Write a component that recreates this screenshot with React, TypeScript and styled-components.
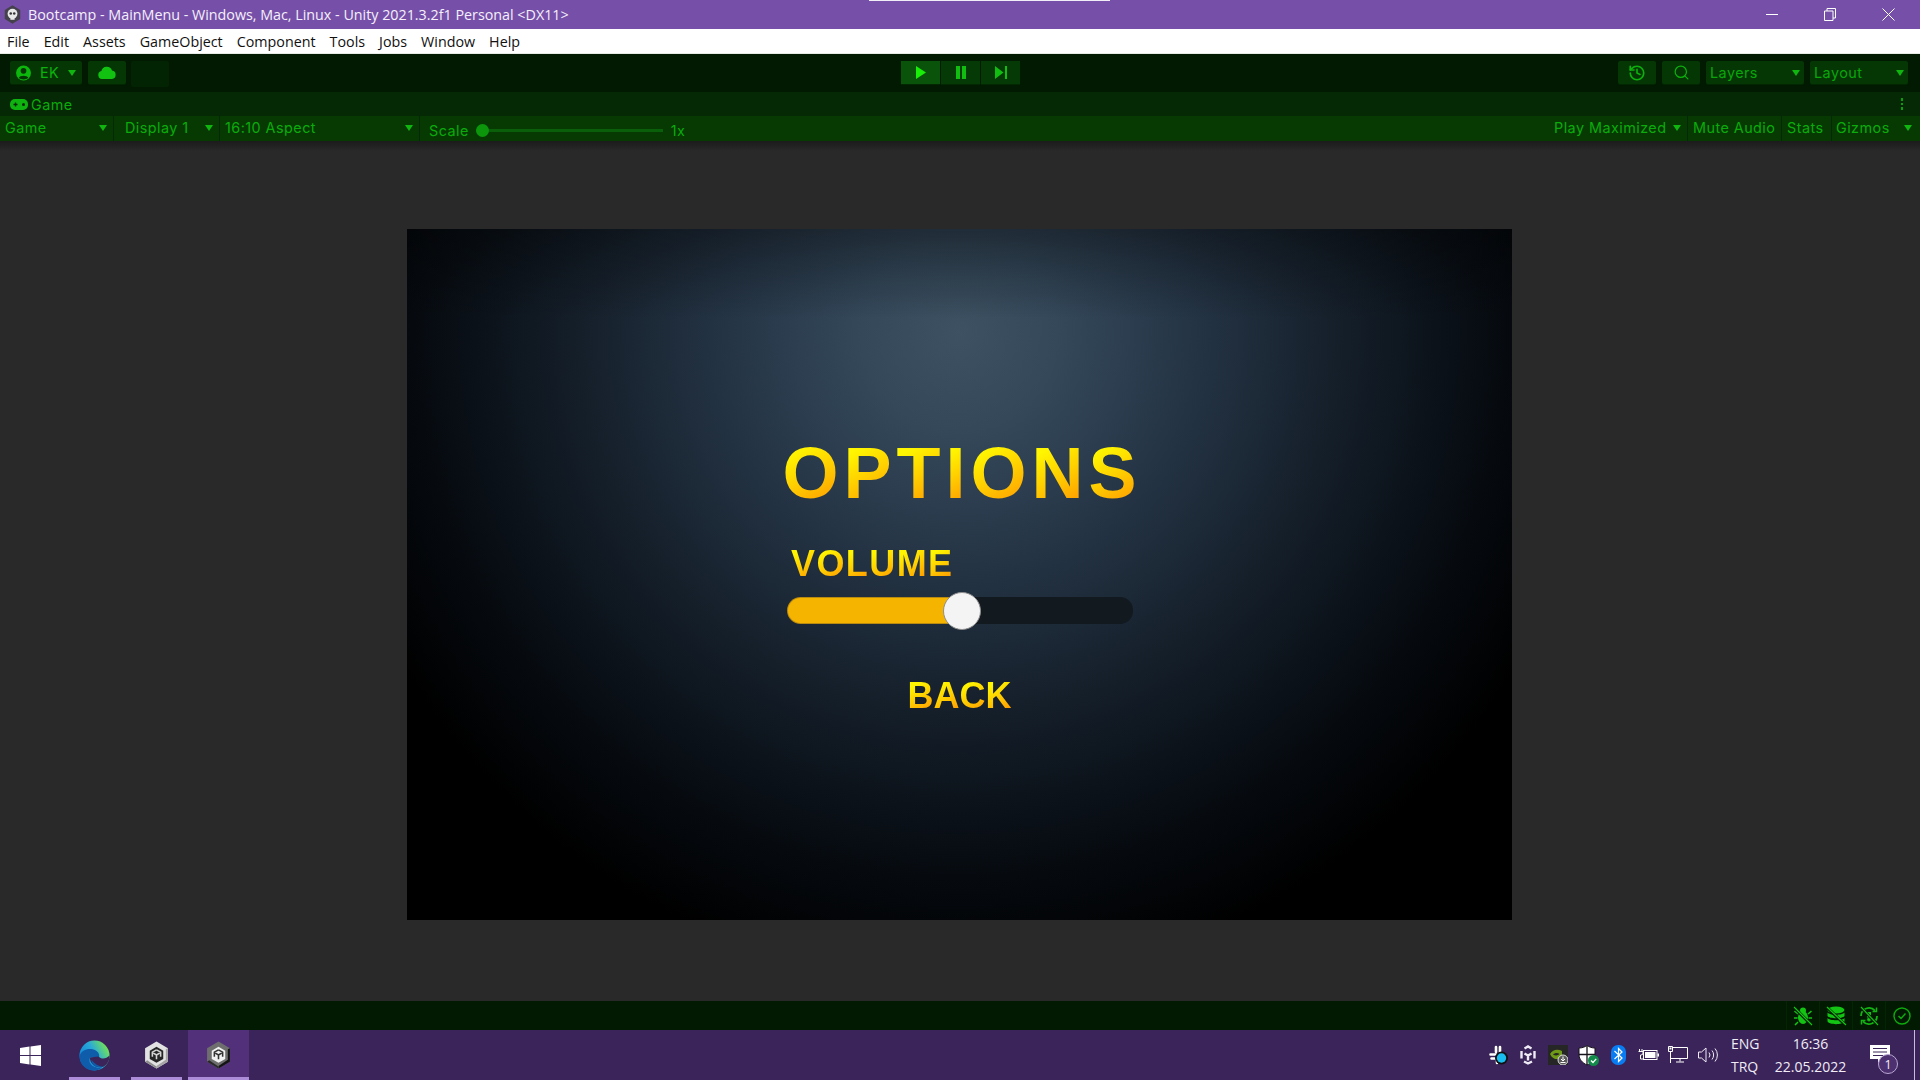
import React from "react";
import styled, { createGlobalStyle } from "styled-components";
import { History, Search } from "lucide-react";

const Global = createGlobalStyle`
  html, body { margin: 0; padding: 0; background: #292929; overflow: hidden; }
  #root { width: 1920px; height: 1080px; }
`;

const Shell = styled.div`
  position: relative;
  width: 1920px;
  height: 1080px;
  display: flex;
  flex-direction: column;
  font-family: "Open Sans", "Liberation Sans", sans-serif;
`;

const TopStrip = styled.div`
  position: absolute;
  left: 869px;
  top: 0;
  width: 241px;
  height: 1px;
  background: #f2eef8;
`;

const TitleBar = styled.div`
  height: 29px;
  flex: none;
  display: flex;
  align-items: center;
  padding: 0 3px 0 4px;
  background: #7650a8;
  color: #f4effa;
`;

const TitleText = styled.span`
  margin-left: 7px;
  font-size: 14.3px;
  white-space: nowrap;
`;

const WindowControls = styled.div`
  margin-left: auto;
  display: flex;
  height: 29px;
`;

const WindowButton = styled.div`
  width: 58px;
  display: flex;
  align-items: center;
  justify-content: center;
`;

const MenuBar = styled.div`
  height: 24px;
  flex: none;
  display: flex;
  align-items: center;
  padding-left: 0;
  background: #fff;
  border-bottom: 1px solid #e6ebe6;
`;

const MenuItem = styled.span`
  padding: 0 7px;
  font-size: 14.3px;
  color: #111;
`;

const MainToolbar = styled.div`
  height: 38px;
  flex: none;
  display: flex;
  align-items: flex-start;
  padding: 7px 12px 0 10px;
  box-sizing: border-box;
  background: #011a01;
`;

const LeftTools = styled.div`
  flex: 0 0 891px;
  display: flex;
  gap: 6px;
`;

const RightTools = styled.div`
  flex: 1;
  display: flex;
  gap: 6px;
  justify-content: flex-end;
`;

const ToolButton = styled.div<{ $w: number }>`
  width: ${(p) => p.$w}px;
  height: 23px;
  display: flex;
  align-items: center;
  justify-content: center;
  gap: 9px;
  background: #053705;
  border-radius: 2px;
  box-shadow: 0 1px 1px #032703;
  color: #0bb30b;
  font-family: Inter, "Liberation Sans", sans-serif;
  font-size: 14.4px;
  letter-spacing: 0.45px;
`;

const BlankButton = styled.div`
  width: 38px;
  height: 26px;
  margin-left: -1px;
  border-radius: 2px;
  background: #022402;
`;

const DropButton = styled(ToolButton)`
  justify-content: space-between;
  padding: 0 4px;
  box-sizing: border-box;
  color: #0aa60a;
`;

const PlayGroup = styled.div`
  display: flex;
  gap: 1px;
  background: #011a01;
  flex: none;
`;

const PlayButton = styled.div<{ $active?: boolean }>`
  width: 39px;
  height: 23px;
  display: flex;
  align-items: center;
  justify-content: center;
  background: ${(p) => (p.$active ? "#0a530a" : "#053905")};
  box-shadow: 0 1px 1px #032703;
`;

const Caret = styled.i`
  display: block;
  flex: none;
  width: 0;
  height: 0;
  border-left: 4.5px solid transparent;
  border-right: 4.5px solid transparent;
  border-top: 6px solid #10b510;
`;

const TabStrip = styled.div`
  height: 24px;
  flex: none;
  display: flex;
  align-items: center;
  padding: 0 17px 0 10px;
  background: #042904;
  color: #0bab0b;
  font-family: Inter, "Liberation Sans", sans-serif;
  font-size: 14.4px;
`;

const TabLabel = styled.span`
  margin-left: 3px;
  letter-spacing: 0.45px;
`;

const Kebab = styled.div`
  margin-left: auto;
  display: flex;
  flex-direction: column;
  gap: 2px;
`;

const KebabDot = styled.i`
  display: block;
  width: 2.5px;
  height: 2.5px;
  background: #0d9c0d;
`;

const GameToolbar = styled.div`
  height: 25px;
  flex: none;
  display: flex;
  background: #073a03;
  color: #0bab0b;
  font-family: Inter, "Liberation Sans", sans-serif;
  font-size: 14.4px;
  letter-spacing: 0.45px;
`;

const Cell = styled.div<{ $w: number; $pl?: number; $pr?: number; $line?: boolean }>`
  flex: none;
  width: ${(p) => p.$w}px;
  box-sizing: border-box;
  display: flex;
  align-items: center;
  justify-content: space-between;
  padding: 0 ${(p) => p.$pr ?? 0}px 2px ${(p) => p.$pl ?? 0}px;
  border-right: 1px solid ${(p) => (p.$line === false ? "transparent" : "#042904")};
  white-space: nowrap;
`;

const ScaleCell = styled.div`
  flex: none;
  display: flex;
  align-items: center;
  padding: 4px 0 0 9px;
`;

const ScaleTrack = styled.div`
  position: relative;
  width: 187px;
  height: 3px;
  margin: 0 8px 0 7px;
  background: #0a5f0a;
`;

const ScaleKnob = styled.i`
  position: absolute;
  left: 0;
  top: -5px;
  display: block;
  width: 13px;
  height: 13px;
  border-radius: 50%;
  background: #0b960b;
`;

const ToolbarFill = styled.div`
  flex: 1;
`;

const GameArea = styled.div`
  flex: 1;
  display: flex;
  justify-content: center;
  padding: 88px 1px 0 0;
  box-sizing: border-box;
  background: linear-gradient(#1b1b1b 0, #292929 10px);
`;

const Canvas = styled.div`
  width: 1105px;
  height: 691px;
  box-sizing: border-box;
  padding-top: 208px;
  display: flex;
  flex-direction: column;
  align-items: center;
  background:
    linear-gradient(rgba(0, 0, 0, 0.38), rgba(0, 0, 0, 0) 90px),
    radial-gradient(ellipse 650px 650px at 50% 15%, #3d5162 0%, #34485a 15%, #253546 35%, #17222e 55%, #0c131b 72%, #04070b 88%, #000 100%);
  background-color: #000;
  font-family: "Liberation Sans", Arial, sans-serif;
  font-weight: 700;
`;

const GoldRow = styled.div<{ $size: number; $spacing?: number }>`
  display: flex;
  font-size: ${(p) => p.$size}px;
  line-height: ${(p) => p.$size}px;
  letter-spacing: ${(p) => p.$spacing ?? 0}px;
`;

const GoldLetter = styled.span`
  background: linear-gradient(150deg, #fff600 20%, #ffce00 52%, #ffa200 84%);
  -webkit-background-clip: text;
  background-clip: text;
  color: transparent;
`;

const OptionsTitle = styled(GoldRow)`
  margin-right: -5px;
`;

const VolumeLabel = styled(GoldRow)`
  align-self: flex-start;
  margin: 37px 0 0 384px;
`;

const BackLabel = styled(GoldRow)`
  margin-top: 54px;
`;

const SliderTrack = styled.div`
  position: relative;
  align-self: flex-start;
  margin: 15px 0 0 381px;
  width: 345px;
  height: 27px;
  border-radius: 13px;
  background: #12191f;
`;

const SliderFill = styled.div`
  height: 25px;
  margin-top: 1px;
  position: absolute;
  left: 0;
  border-radius: 13px 0 0 13px;
  background: #f5b400;
  box-shadow: 0 0 0 1px #b98a10;
`;

const SliderKnob = styled.div`
  position: absolute;
  top: -5px;
  width: 38px;
  height: 38px;
  margin-left: -20px;
  box-sizing: border-box;
  border-radius: 50%;
  background: #f4f4f4;
  border: 1px solid #8f8f8f;
`;

const StatusBar = styled.div`
  height: 29px;
  flex: none;
  display: flex;
  justify-content: flex-end;
  padding-right: 2px;
  background: #011a01;
`;

const StatusCell = styled.div`
  width: 33px;
  display: flex;
  align-items: center;
  justify-content: center;
  border-left: 1px solid #022602;
  box-sizing: border-box;
`;

const Taskbar = styled.div`
  height: 50px;
  flex: none;
  display: flex;
  background: #3a2459;
  color: #f1ecf7;
`;

const StartSlot = styled.div`
  width: 60px;
  margin-right: 4px;
  display: flex;
  align-items: center;
  justify-content: center;
`;

const TaskItem = styled.div<{ $active?: boolean }>`
  position: relative;
  width: 61px;
  margin-right: 1px;
  display: flex;
  align-items: center;
  justify-content: center;
  background: ${(p) => (p.$active ? "#52317a" : "transparent")};
`;

const TaskMark = styled.i<{ $inset: number }>`
  position: absolute;
  bottom: 0;
  left: ${(p) => p.$inset}px;
  right: ${(p) => p.$inset}px;
  height: 3px;
  background: #ac8cd9;
`;

const Tray = styled.div`
  margin-left: auto;
  display: flex;
`;

const TraySlot = styled.div`
  width: 30px;
  display: flex;
  align-items: center;
  justify-content: center;
`;

const LangBlock = styled.div`
  width: 43px;
  box-sizing: border-box;
  padding-left: 8px;
  display: flex;
  flex-direction: column;
  justify-content: center;
  gap: 5px;
  font-size: 14px;
  line-height: 18px;
`;

const ClockBlock = styled(LangBlock)`
  width: 89px;
  padding: 0;
  align-items: center;
`;

const NoticeSlot = styled.div`
  position: relative;
  width: 59px;
  display: flex;
  justify-content: center;
  padding: 15px 10px 0 0;
  box-sizing: border-box;
`;

const NoticeBadge = styled.span`
  position: absolute;
  left: 23px;
  top: 24px;
  width: 20px;
  height: 20px;
  box-sizing: border-box;
  border-radius: 50%;
  border: 1px solid #b9a8d2;
  background: #4c3070;
  display: flex;
  align-items: center;
  justify-content: center;
  font-size: 12.5px;
`;

const DesktopEdge = styled.div`
  width: 6px;
  border-left: 1px solid #c9bcdc;
  box-sizing: border-box;
`;

const GoldWord = ({ text }: { text: string }) => (
  <>
    {text.split("").map((c, i) => (
      <GoldLetter key={i}>{c}</GoldLetter>
    ))}
  </>
);

const UnityIcon = ({ light }: { light?: boolean }) => (
  <svg width={25} height={28} viewBox="0 0 24 27">
    <path d="M12 .5 23 7v13l-11 6.500L1 20V7z" fill={light ? "#e2e2e2" : "#6e6e6e"} />
    <path d="M23 7v13l-11 6.500V24l9-6V8z" fill={light ? "#a5a5a5" : "#141414"} />
    <path d="M12 26.500 1 20l2-1.500 9 6z" fill={light ? "#8e8e8e" : "#2a2a2a"} />
    <path d="M12 5.500 18.500 9.300v8L12 21l-6.500-3.700v-8z" fill={light ? "#262626" : "#f2f2f2"} />
    <path
      d="M12 8.500 8 10.800v4.500M12 8.500l4 2.300v4.500M12 13.500v4M12 13.500l-3 -1.800M12 13.500l3 -1.800"
      fill="none"
      stroke={light ? "#d4d4d4" : "#333"}
      strokeWidth="1.500"
    />
  </svg>
);

const AppGlyph = () => (
  <svg width="17" height="19" viewBox="0 0 24 27">
    <path d="M12 .5 23 7v13l-11 6.500L1 20V7z" fill="#45414c" />
    <circle cx="12" cy="12.500" r="7" fill="#e8e8e8" />
    <rect x="9" y="17" width="6" height="4" fill="#e8e8e8" />
    <circle cx="9.500" cy="12" r="1.800" fill="#333" />
    <circle cx="14.500" cy="12" r="1.800" fill="#333" />
  </svg>
);

const EdgeIcon = () => (
  <svg width="31" height="31" viewBox="0 0 32 32">
    <defs>
      <linearGradient id="edgeOuter" x1="0.1" y1="0.8" x2="0.95" y2="0.3">
        <stop offset="0" stopColor="#0c84d8" />
        <stop offset="0.55" stopColor="#2aa9d8" />
        <stop offset="1" stopColor="#6fe05c" />
      </linearGradient>
    </defs>
    <circle cx="16" cy="16" r="15.500" fill="url(#edgeOuter)" />
    <path d="M.6 17C2 10 9 8.500 14 9.500c5 1 8 5 6.500 8.500h-9C8.500 23 14 30 24 28.500 20 31.500 16 31.700 14 31.500 6 30.800.4 24 .6 17z" fill="#0f5cab" />
    <path d="M20 17c3 3 8 2.800 11.400-1C31.800 20 30 25 25 27.500c-6 2.200-12-1-13.500-7-.3-1 0-2.500 0-2.500z" fill="#3a2459" />
    <path d="M13 20c2 4 7 7 12 7.500-4 1.500-9 .5-11-3-1-1.500-1-3-1-4.500z" fill="#0f5cab" />
  </svg>
);

const WinLogo = () => (
  <svg width="21" height="21" viewBox="0 0 21 21">
    <path d="M0 3 9.500 1.600v8.300H0zM10.500 1.500 21 0v9.900H10.500zM0 11h9.500v8.400L0 18zM10.500 11H21v10l-10.500-1.500z" fill="#fff" />
  </svg>
);

const UserGlyph = () => (
  <svg width="15" height="16" viewBox="0 0 14 15">
    <circle cx="7" cy="7.500" r="7" fill="#0db80d" />
    <circle cx="7" cy="5.500" r="2.700" fill="#053705" />
    <path d="M2.500 12c1-2.500 8-2.500 9 0-2 2-7 2-9 0z" fill="#053705" />
  </svg>
);

const CloudGlyph = () => (
  <svg width="18" height="13" viewBox="0 0 18 13">
    <path d="M4 13a4 4 0 0 1-.6-7.900A5.500 5.500 0 0 1 14 4.500 4.300 4.300 0 0 1 14 13z" fill="#11c211" />
  </svg>
);

const GamepadGlyph = () => (
  <svg width="18" height="11" viewBox="0 0 18 11">
    <rect x="0" y="0" width="18" height="11" rx="5" fill="#0fb30f" />
    <path d="M3.500 5.500h4M5.500 3.500v4" stroke="#042904" strokeWidth="1.300" />
    <circle cx="13.500" cy="5.500" r="1.500" fill="#042904" />
  </svg>
);

const PlayGlyph = () => (
  <svg width="10" height="13" viewBox="0 0 10 13">
    <path d="M0 0 10 6.500 0 13z" fill="#18ee08" />
  </svg>
);

const PauseGlyph = () => (
  <svg width="10" height="13" viewBox="0 0 10 13">
    <path d="M0 0h4v13H0zM6 0h4v13H6z" fill="#10bd10" />
  </svg>
);

const StepGlyph = () => (
  <svg width="12" height="13" viewBox="0 0 12 13">
    <path d="M0 0 8.500 6.500 0 13zM10 0H12v13H10z" fill="#10bd10" />
  </svg>
);

const BugOff = () => (
  <svg width="20" height="20" viewBox="0 0 20 20" fill="#14c414">
    <ellipse cx="10" cy="11.500" rx="5" ry="6.500" />
    <circle cx="10" cy="4.500" r="3" />
    <path d="M5 8 1.500 5M15 8l3.500-3M4.500 12H1M15.500 12H19M5 16l-3 3M15 16l3 3" stroke="#14c414" strokeWidth="1.600" />
    <path d="M1 1.500 18.500 19" stroke="#011a01" strokeWidth="3" />
    <path d="M1 1 19 19" stroke="#14c414" strokeWidth="1.300" />
  </svg>
);

const DbOff = () => (
  <svg width="21" height="20" viewBox="0 0 21 20" fill="#14c414">
    <ellipse cx="10" cy="4" rx="8.500" ry="3.500" />
    <path d="M1.500 6.500c2 3 15 3 17 0v3.500c-2 3-15 3-17 0zM1.500 12c2 3 15 3 17 0v3.500c-2 3.500-15 3.500-17 0z" />
    <path d="M1 1.500 20 19.500" stroke="#011a01" strokeWidth="3" />
    <path d="M1 1 20 19" stroke="#14c414" strokeWidth="1.300" />
  </svg>
);

const SyncOff = () => (
  <svg width="20" height="20" viewBox="0 0 20 20" fill="none" stroke="#14b414">
    <path d="M2 10a8 8 0 0 1 14-5.300M18 10a8 8 0 0 1-14 5.300" strokeWidth="1.800" />
    <path d="M17.500 1.500v4h-4M2.500 18.500v-4h4" strokeWidth="1.500" />
    <path d="M10 6v5.500" stroke="#14c414" strokeWidth="4" />
    <circle cx="10" cy="13.500" r="1.500" fill="#14c414" />
    <path d="M1.500 1 19 19" stroke="#011a01" strokeWidth="3" />
    <path d="M2 1 19 19" stroke="#14c414" strokeWidth="1.200" />
  </svg>
);

const CheckRing = () => (
  <svg width="18" height="18" viewBox="0 0 18 18" fill="none" stroke="#0fa90f">
    <circle cx="9" cy="9" r="8" strokeWidth="1.400" />
    <path d="M5.500 9 8 11.500 12.500 6.500" strokeWidth="1.500" />
  </svg>
);

const SlackGlyph = () => (
  <svg width="19" height="20" viewBox="0 0 19 20">
    <path d="M1.500 9.500h6M2.500 13.500h5M7 2v5M11 2v6M8 14v4" stroke="#fff" strokeWidth="2.600" strokeLinecap="round" />
    <circle cx="12.500" cy="13" r="6.500" fill="#111" />
    <circle cx="12.500" cy="13" r="4.700" fill="#19bdf0" />
  </svg>
);

const UnityTray = () => (
  <svg width="18" height="20" viewBox="0 0 18 20" fill="none" stroke="#efeaf5" strokeWidth="2.400">
    <path d="M5.500 3.500 9 1.500l3.500 2M15.500 6v7.500M2.500 6v7.500M5 16.500l4 2 4-2M9 10.500v5M9 10.500 5.500 8.500M9 10.500l3.500-2" />
  </svg>
);

const NvidiaGlyph = () => (
  <svg width="20" height="20" viewBox="0 0 20 20">
    <rect width="20" height="20" fill="#262626" />
    <path d="M2 9c3-5 8-5 12-3v8H7C4.500 13 3 11 2 9z" fill="#6f9a18" />
    <path d="M5 9.500c2-2 5-2 6.500-.5-1.500 1.500-4 2-6.500.5z" fill="#262626" />
    <circle cx="15" cy="15" r="5" fill="#5a5a5a" stroke="#ddd" />
    <path d="M15 11.500v4M13 14l2 2 2-2M12.500 17.500h5" stroke="#fff" strokeWidth="1" fill="none" />
  </svg>
);

const ShieldGlyph = () => (
  <svg width="21" height="21" viewBox="0 0 21 21">
    <path d="M9 .5c2 1.500 5 2.500 8 2.500v6.500c0 5-3.500 8.500-8 10.500-4.500-2-8-5.500-8-10.500V3c3 0 6-1 8-2.500z" fill="#fff" stroke="#16131b" strokeWidth="1" />
    <path d="M9 1v19M1 9.500h16" stroke="#16131b" strokeWidth="1.300" />
    <circle cx="15.500" cy="15.500" r="5.500" fill="#128a4a" />
    <path d="M13 15.500l2 2 3.200-3.600" stroke="#fff" strokeWidth="1.300" fill="none" />
  </svg>
);

const BluetoothGlyph = () => (
  <svg width="15" height="20" viewBox="0 0 15 20">
    <rect width="15" height="20" rx="7" fill="#0a7cf2" />
    <path d="M3.500 6 11 13 7.500 16.500v-13L11 7 3.500 14" stroke="#fff" strokeWidth="1.200" fill="none" />
  </svg>
);

const BatteryGlyph = () => (
  <svg width="21" height="14" viewBox="0 0 21 14" fill="none" stroke="#fff">
    <path d="M1.500 1v2.500M4 1v2.500M.5 3.500h4.500v1.500a2 2 0 0 1-2 2H2.500V11H5" strokeWidth="1" />
    <rect x="5.500" y="2.500" width="13.500" height="9" strokeWidth="1" />
    <rect x="7" y="4" width="10.500" height="6" fill="#fff" stroke="none" />
    <rect x="19.500" y="5.500" width="1.500" height="3" fill="#fff" stroke="none" />
  </svg>
);

const NetworkGlyph = () => (
  <svg width="20" height="18" viewBox="0 0 20 18" fill="none" stroke="#fff" strokeWidth="1">
    <path d="M4.500 1.500H19.500V12.500H3" />
    <path d="M.5 .5h4v5h-4zM2.500 5.500V17M12 12.500v3M8 16h8" />
    <rect x="1.500" y="1.500" width="2" height="2" fill="#fff" stroke="none" />
  </svg>
);

const SpeakerGlyph = () => (
  <svg width="20" height="16" viewBox="0 0 20 16" fill="none" stroke="#efeaf5" strokeWidth="1">
    <path d="M.5 5h3L8 1v14L3.500 11h-3z" />
    <path d="M11 5.500a4 4 0 0 1 0 5M14 3.500a7 7 0 0 1 0 9M17 1.500a10 10 0 0 1 0 13" />
  </svg>
);

const NoticeGlyph = () => (
  <svg width="20" height="18" viewBox="0 0 20 18">
    <path d="M0 0h20v14h-8l-4 4v-4H0z" fill="#fff" />
    <path d="M3 3.500h14M3 7h14M3 10.500h10" stroke="#3a2459" strokeWidth="1" />
  </svg>
);

const menus = ["File", "Edit", "Assets", "GameObject", "Component", "Tools", "Jobs", "Window", "Help"];
const volume = 0.507;

export default function App() {
  return (
    <Shell>
      <Global />
      <TopStrip />
      <TitleBar>
        <AppGlyph />
        <TitleText>Bootcamp - MainMenu - Windows, Mac, Linux - Unity 2021.3.2f1 Personal &lt;DX11&gt;</TitleText>
        <WindowControls>
          <WindowButton>
            <svg width="12" height="12" viewBox="0 0 12 12"><path d="M0 5.500h12" stroke="#fff" /></svg>
          </WindowButton>
          <WindowButton>
            <svg width="12" height="13" viewBox="0 0 12 13" fill="none" stroke="#fff">
              <path d="M.5 3h8.500v9.500H.5zM3 3V.5h8.500V10H9" />
            </svg>
          </WindowButton>
          <WindowButton>
            <svg width="13" height="13" viewBox="0 0 13 13"><path d="M.5.500l12 12M12.500.500l-12 12" stroke="#fff" /></svg>
          </WindowButton>
        </WindowControls>
      </TitleBar>

      <MenuBar>
        {menus.map((m) => (
          <MenuItem key={m}>{m}</MenuItem>
        ))}
      </MenuBar>

      <MainToolbar>
        <LeftTools>
          <ToolButton $w={72}>
            <UserGlyph />
            EK
            <Caret />
          </ToolButton>
          <ToolButton $w={38}>
            <CloudGlyph />
          </ToolButton>
          <BlankButton />
        </LeftTools>
        <PlayGroup>
          <PlayButton $active><PlayGlyph /></PlayButton>
          <PlayButton><PauseGlyph /></PlayButton>
          <PlayButton><StepGlyph /></PlayButton>
        </PlayGroup>
        <RightTools>
          <ToolButton $w={38}>
            <History size={18} strokeWidth={2.2} color="#0db00d" />
          </ToolButton>
          <ToolButton $w={38}>
            <Search size={17} strokeWidth={1.7} color="#0db00d" />
          </ToolButton>
          <DropButton $w={98}>Layers<Caret /></DropButton>
          <DropButton $w={98}>Layout<Caret /></DropButton>
        </RightTools>
      </MainToolbar>

      <TabStrip>
        <GamepadGlyph />
        <TabLabel>Game</TabLabel>
        <Kebab>
          <KebabDot />
          <KebabDot />
          <KebabDot />
        </Kebab>
      </TabStrip>

      <GameToolbar>
        <Cell $w={114} $pl={5} $pr={6}>Game<Caret /></Cell>
        <Cell $w={106} $pl={11} $pr={6}>Display 1<Caret /></Cell>
        <Cell $w={200} $pl={5} $pr={6}>16:10 Aspect<Caret /></Cell>
        <ScaleCell>
          Scale
          <ScaleTrack><ScaleKnob /></ScaleTrack>
          1x
        </ScaleCell>
        <ToolbarFill />
        <Cell $w={138} $pl={4} $pr={6}>Play Maximized<Caret /></Cell>
        <Cell $w={94} $pl={5}>Mute Audio</Cell>
        <Cell $w={50} $pl={5}>Stats</Cell>
        <Cell $w={66} $pl={4} $line={false}>Gizmos</Cell>
        <Cell $w={22} $pl={6} $line={false}><Caret /></Cell>
      </GameToolbar>

      <GameArea>
        <Canvas>
          <OptionsTitle $size={72} $spacing={5}><GoldWord text="OPTIONS" /></OptionsTitle>
          <VolumeLabel $size={36} $spacing={1.4}><GoldWord text="VOLUME" /></VolumeLabel>
          <SliderTrack>
            <SliderFill style={{ width: `${volume * 100}%` }} />
            <SliderKnob style={{ left: `${volume * 100}%` }} />
          </SliderTrack>
          <BackLabel $size={36}><GoldWord text="BACK" /></BackLabel>
        </Canvas>
      </GameArea>

      <StatusBar>
        <StatusCell><BugOff /></StatusCell>
        <StatusCell><DbOff /></StatusCell>
        <StatusCell><SyncOff /></StatusCell>
        <StatusCell><CheckRing /></StatusCell>
      </StatusBar>

      <Taskbar>
        <StartSlot><WinLogo /></StartSlot>
        <TaskItem><EdgeIcon /><TaskMark $inset={5} /></TaskItem>
        <TaskItem><UnityIcon light /><TaskMark $inset={5} /></TaskItem>
        <TaskItem $active><UnityIcon /><TaskMark $inset={0} /></TaskItem>
        <Tray>
          <TraySlot><SlackGlyph /></TraySlot>
          <TraySlot><UnityTray /></TraySlot>
          <TraySlot><NvidiaGlyph /></TraySlot>
          <TraySlot><ShieldGlyph /></TraySlot>
          <TraySlot><BluetoothGlyph /></TraySlot>
          <TraySlot><BatteryGlyph /></TraySlot>
          <TraySlot><NetworkGlyph /></TraySlot>
          <TraySlot><SpeakerGlyph /></TraySlot>
          <LangBlock><span>ENG</span><span>TRQ</span></LangBlock>
          <ClockBlock><span>16:36</span><span>22.05.2022</span></ClockBlock>
          <NoticeSlot>
            <NoticeGlyph />
            <NoticeBadge>1</NoticeBadge>
          </NoticeSlot>
          <DesktopEdge />
        </Tray>
      </Taskbar>
    </Shell>
  );
}
